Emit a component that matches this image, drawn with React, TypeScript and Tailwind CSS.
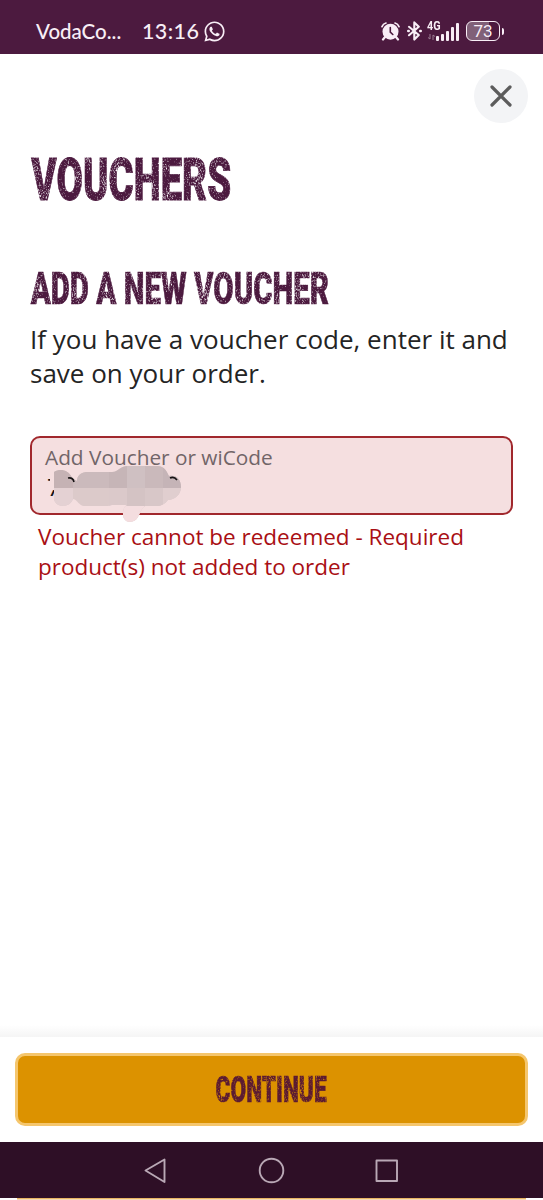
import React from 'react';
import { FaWhatsapp } from 'react-icons/fa';

const signalBars = [5, 7, 10, 14, 18];

function GrungeFilter() {
  return (
    <svg width="0" height="0" className="absolute" aria-hidden="true">
      <filter id="grunge" x="-0.02" y="-0.02" width="1.04" height="1.04" colorInterpolationFilters="sRGB">
        <feTurbulence type="fractalNoise" baseFrequency="0.55" numOctaves="2" seed="8" result="fine" />
        <feTurbulence type="fractalNoise" baseFrequency="0.055" numOctaves="1" seed="3" result="patches" />
        <feComposite in="fine" in2="patches" operator="arithmetic" k1="0" k2="1" k3="0.6" k4="-0.3" result="noise" />
        <feColorMatrix
          in="noise"
          type="matrix"
          values="0 0 0 0 0  0 0 0 0 0  0 0 0 0 0  0 0 0 -2.4 2.3"
          result="mask"
        />
        <feComposite in="SourceGraphic" in2="mask" operator="in" />
      </filter>
    </svg>
  );
}

function AlarmIcon() {
  return (
    <svg width="19" height="19" viewBox="0 0 19 19" fill="none">
      <path d="M1 4.6a6 6 0 0 1 4-3.6M18 4.6a6 6 0 0 0-4-3.6" stroke="#f8eef6" strokeWidth="1.7" strokeLinecap="round" />
      <path d="M4 15l-2 2.5M15 15l2 2.5" stroke="#f8eef6" strokeWidth="2.2" strokeLinecap="round" />
      <circle cx="9.5" cy="9.7" r="8" fill="#f8eef6" />
      <path d="M9.3 5.5v4.7l2.5 2.3" stroke="#4c1a3f" strokeWidth="1.6" strokeLinecap="round" />
    </svg>
  );
}

function BluetoothIcon() {
  return (
    <svg width="15" height="20" viewBox="0 0 15 20" fill="none" stroke="#f8eef6" strokeWidth="2.1" strokeLinejoin="round" strokeLinecap="round">
      <path d="M2 5.8l9.8 8.2L7.3 18.6V1.4l4.5 4.4L2 14.2" />
      <path d="M1.2 10h.6M13.2 10h.6" strokeWidth="2.4" />
    </svg>
  );
}

function StatusBar() {
  return (
    <div className="flex h-[54px] items-center bg-[#4c1a3f] pt-2 pl-9 font-['Lato',sans-serif] text-[#f8eef6]">
      <span className="w-[106px] text-[20.5px] leading-6 font-medium">VodaCo...</span>
      <span className="w-[61px] text-[21.5px] leading-6 font-medium tracking-[0.4px] whitespace-nowrap">13:16</span>
      <FaWhatsapp className="h-[23px] w-[23px]" />
      <div className="ml-[155px] flex items-center">
        <AlarmIcon />
        <div className="ml-[7px]">
          <BluetoothIcon />
        </div>
        <div className="relative ml-[5px] flex h-5 w-8 items-end justify-end gap-[2px]">
          <span className="absolute -top-px left-0 origin-left scale-x-90 font-['Roboto',sans-serif] text-[12px] leading-3 font-bold">4G</span>
          <svg className="absolute bottom-[1px] left-[1px]" width="7" height="6" viewBox="0 0 7 6" stroke="#9b7c93" fill="none">
            <path d="M2 0v5L0 3.5M5 6V1l2 1.5" />
          </svg>
          {signalBars.map((height) => (
            <span key={height} className="w-[3px] rounded-[1px] bg-[#f8eef6]" style={{ height }}></span>
          ))}
        </div>
        <div className="ml-[7px] flex items-center gap-[2px]">
          <div className="flex h-5 w-[34px] items-center justify-center rounded-[6px] border-[1.5px] border-[#f8eef6] bg-linear-to-r from-[#806078] from-70% to-transparent to-70% font-['Roboto',sans-serif] text-[17px] leading-4">
            73
          </div>
          <span className="h-[7px] w-[2px] rounded-r bg-[#f8eef6]"></span>
        </div>
      </div>
    </div>
  );
}

// Smudge that hides the entered voucher code
function CodeScribble() {
  return (
    <svg className="absolute top-[26px] left-[15px]" width="140" height="62" viewBox="0 0 140 62">
      <defs>
        <clipPath id="smudge">
          <path d="M7 8C13 4 22 6 25 14L30 17C30 13 32 9 39 8H65C72 8 72 2 81 2H111C119 3 120 9 122 12C130 11 134 16 134 23C134 31 127 36 121 36C118 40 114 42 110 42H98C95 44 93 49 91 53C88 60 75 60 76 49C76 45 78 42 80 41H65L61 42H37C32 42 31 36 26 35C24 40 20 42 16 42C10 42 7 38 7 34Z" />
        </clipPath>
      </defs>
      <text x="0" y="32" className="font-['Open_Sans',sans-serif] text-[24px]" fill="#171314">7</text>
      <rect x="3" y="11" width="12" height="15" fill="#f5dfe0" />
      <g clipPath="url(#smudge)">
        <rect width="140" height="62" fill="#dccaca" />
        <rect x="7" width="19" height="24" fill="#c5b2b4" />
        <rect x="26" width="36" height="24" fill="#cbbabc" />
        <rect x="62" width="18" height="24" fill="#c6b5b7" />
        <rect x="80" width="18" height="24" fill="#cfc0c2" />
        <rect x="98" width="18" height="24" fill="#cab9bb" />
        <rect x="116" width="24" height="24" fill="#c5b4b7" />
        <rect x="7" y="24" width="19" height="19" fill="#e4d1d3" />
        <rect x="62" y="24" width="18" height="19" fill="#dbc9ca" />
        <rect x="80" y="24" width="18" height="19" fill="#d4c3c4" />
        <rect x="98" y="24" width="18" height="19" fill="#d8c7c8" />
        <rect x="116" y="24" width="24" height="19" fill="#e0cecf" />
        <rect y="42" width="140" height="20" fill="#f4dddf" />
      </g>
      <path d="M21 14q5-1 6 4M123 14q4-2 7 2" stroke="#171314" strokeWidth="1.6" fill="none" />
    </svg>
  );
}

function VoucherForm() {
  return (
    <main className="flex-1 px-[30px]">
      <h1 className="mt-[27px] h-[60px] w-[340px] origin-left scale-x-[0.64] pl-[2px] font-['Roboto',sans-serif] text-[60px] leading-[60px] font-black whitespace-nowrap text-[#4c1a3f] [-webkit-text-stroke:0.8px_#4c1a3f] [filter:url(#grunge)]">
        VOUCHERS
      </h1>
      <h2 className="mt-[56px] h-[46px] w-[480px] origin-left scale-x-[0.663] pl-px font-['Roboto',sans-serif] text-[44.5px] leading-[46px] font-black whitespace-nowrap text-[#4c1a3f] [-webkit-text-stroke:0.6px_#4c1a3f] [filter:url(#grunge)]">
        ADD A NEW VOUCHER
      </h2>
      <p className="mt-[10px] text-[26px] leading-[34px] whitespace-nowrap text-[#242424]">
        If you have a voucher code, enter it and
        <br />
        save on your order.
      </p>
      <div className="relative mt-[46px] h-[79px] rounded-[10px] border-2 border-[#a1282d] bg-[#f5dfe0] px-[13px] pt-[6px]">
        <label className="block text-[20.8px] leading-[26px] text-[#716568]">Add Voucher or wiCode</label>
        <CodeScribble />
      </div>
      <p className="mt-[7px] pl-2 text-[22.5px] leading-[30px] whitespace-nowrap text-[#a90f14]">
        Voucher cannot be redeemed - Required
        <br />
        product(s) not added to order
      </p>
    </main>
  );
}

function NavigationBar() {
  return (
    <nav className="h-[56px] bg-[#2e0f26]">
      <svg width="543" height="56" fill="none" stroke="#b9a8b5" strokeWidth="1.9" strokeLinejoin="round">
        <path d="M145.5 28.5L164.5 17.5V40Z" />
        <circle cx="271.5" cy="28.5" r="11.8" />
        <rect x="376.5" y="18.5" width="20.5" height="20.5" />
      </svg>
    </nav>
  );
}

export default function App() {
  return (
    <div className="flex h-[1200px] w-[543px] flex-col overflow-hidden bg-white font-['Open_Sans',sans-serif]">
      <GrungeFilter />
      <StatusBar />
      <header className="flex justify-end pt-[15px] pr-[15px]">
        <button className="flex h-[54px] w-[54px] items-center justify-center rounded-full bg-[#f3f4f6]" aria-label="Close">
          <svg width="22" height="22" viewBox="0 0 22 22" stroke="#5c5c5c" strokeWidth="3.2" strokeLinecap="round">
            <path d="M2 2l18 18M20 2L2 20" />
          </svg>
        </button>
      </header>
      <VoucherForm />
      <div className="h-3 bg-linear-to-b from-white to-[#f5f5f5]"></div>
      <footer className="h-[105px] px-[15px] pt-4">
        <button className="flex h-[73px] w-full items-center justify-center rounded-[10px] border-[3px] border-[#f5c66d] bg-[#dc9200]">
          <span className="scale-x-[0.63] font-['Roboto',sans-serif] text-[36px] leading-9 font-black text-[#5b1b32] [-webkit-text-stroke:0.6px_#5b1b32] [filter:url(#grunge)]">
            CONTINUE
          </span>
        </button>
      </footer>
      <NavigationBar />
      <div className="mx-[17px] h-[2px] bg-linear-to-b from-[#e0a12c] to-[#fbeed8]"></div>
    </div>
  );
}
